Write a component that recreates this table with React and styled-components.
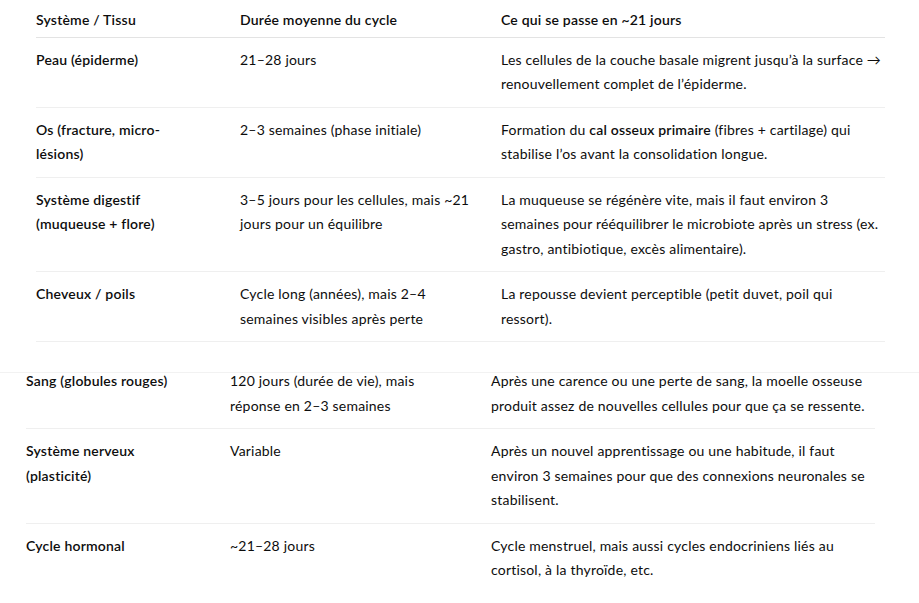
import React from "react";
import styled, { createGlobalStyle } from "styled-components";

const Global = createGlobalStyle`
  html, body { margin: 0; padding: 0; background: #ffffff; }
  body {
    font-family: "Lato", "Noto Sans", sans-serif;
    color: #0d0d0d;
  }
`;

const Page = styled.div`
  width: 919px;
  height: 603px;
  overflow: hidden;
  display: flex;
  flex-direction: column;
`;

const Shot = styled.section`
  height: ${(p) => p.$height}px;
  flex: none;
  overflow: hidden;
  padding-left: ${(p) => p.$left}px;
  border-top: ${(p) => (p.$seam ? "1px solid #f2f2f2" : "none")};
  box-sizing: border-box;
`;

const Table = styled.table`
  width: 849px;
  border-collapse: collapse;
  table-layout: fixed;
  margin-top: ${(p) => p.$offset || 0}px;
  font-size: 14px;
  line-height: 24.5px;
  letter-spacing: 0.2px;
`;

const Th = styled.th`
  text-align: left;
  vertical-align: top;
  font-weight: 600;
  padding: 8px ${(p) => p.$pr}px 4px 0;
  border-bottom: 1px solid #e3e3e3;
`;

const Td = styled.td`
  vertical-align: top;
  padding: 10px ${(p) => p.$pr}px 10px 0;
  font-weight: ${(p) => (p.$head ? 600 : 400)};
  border-bottom: 1px solid ${(p) => (p.$last ? "transparent" : "#efefef")};
`;

const Strong = styled.strong`
  font-weight: 600;
`;

const COLS = [204, 261, 384];
const PADS = [40, 29, 3];

const topRows = [
  ["Peau (épiderme)", "21–28 jours", "Les cellules de la couche basale migrent jusqu’à la surface → renouvellement complet de l’épiderme."],
  [
    "Os (fracture, micro-lésions)",
    "2–3 semaines (phase initiale)",
    <>
      Formation du <Strong>cal osseux primaire</Strong> (fibres + cartilage) qui stabilise l’os avant la consolidation longue.
    </>,
  ],
  [
    "Système digestif (muqueuse + flore)",
    "3–5 jours pour les cellules, mais ~21 jours pour un équilibre",
    "La muqueuse se régénère vite, mais il faut environ 3 semaines pour rééquilibrer le microbiote après un stress (ex. gastro, antibiotique, excès alimentaire).",
  ],
  ["Cheveux / poils", "Cycle long (années), mais 2–4 semaines visibles après perte", "La repousse devient perceptible (petit duvet, poil qui ressort)."],
];

const bottomRows = [
  [
    "Sang (globules rouges)",
    "120 jours (durée de vie), mais réponse en 2–3 semaines",
    "Après une carence ou une perte de sang, la moelle osseuse produit assez de nouvelles cellules pour que ça se ressente.",
  ],
  [
    "Système nerveux (plasticité)",
    "Variable",
    "Après un nouvel apprentissage ou une habitude, il faut environ 3 semaines pour que des connexions neuronales se stabilisent.",
  ],
  ["Cycle hormonal", "~21–28 jours", "Cycle menstruel, mais aussi cycles endocriniens liés au cortisol, à la thyroïde, etc."],
];

function Cols() {
  return (
    <colgroup>
      {COLS.map((w, i) => (
        <col key={i} style={{ width: w }} />
      ))}
    </colgroup>
  );
}

function Body({ rows, lastOpen }) {
  return (
    <tbody>
      {rows.map((r, i) => (
        <tr key={i}>
          {r.map((c, j) => (
            <Td key={j} $pr={PADS[j]} $head={j === 0} $last={lastOpen && i === rows.length - 1}>
              {c}
            </Td>
          ))}
        </tr>
      ))}
    </tbody>
  );
}

export default function App() {
  return (
    <Page>
      <Global />
      <Shot $height={372} $left={36}>
        <Table>
          <Cols />
          <thead>
            <tr>
              <Th $pr={PADS[0]}>Système / Tissu</Th>
              <Th $pr={PADS[1]}>Durée moyenne du cycle</Th>
              <Th $pr={PADS[2]}>Ce qui se passe en ~21 jours</Th>
            </tr>
          </thead>
          <Body rows={topRows} />
        </Table>
      </Shot>
      <Shot $height={231} $left={26} $seam>
        <Table $offset={-14}>
          <Cols />
          <Body rows={bottomRows} lastOpen />
        </Table>
      </Shot>
    </Page>
  );
}
